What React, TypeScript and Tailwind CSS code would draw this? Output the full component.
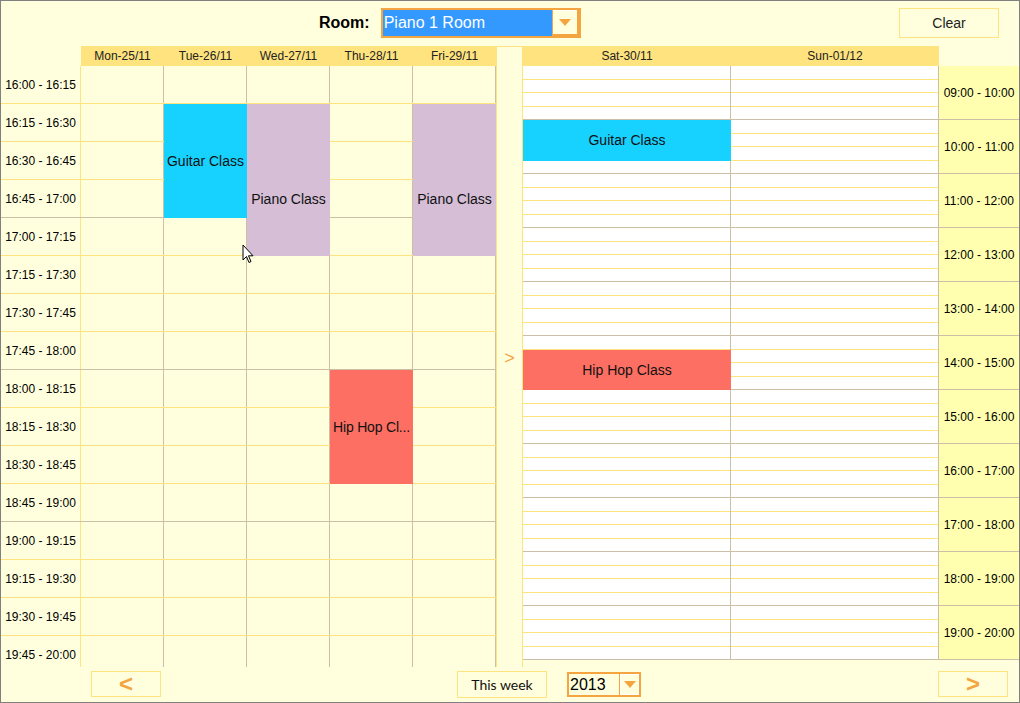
import React from "react";

const leftTimes = [
  "16:00 - 16:15", "16:15 - 16:30", "16:30 - 16:45", "16:45 - 17:00",
  "17:00 - 17:15", "17:15 - 17:30", "17:30 - 17:45", "17:45 - 18:00",
  "18:00 - 18:15", "18:15 - 18:30", "18:30 - 18:45", "18:45 - 19:00",
  "19:00 - 19:15", "19:15 - 19:30", "19:30 - 19:45", "19:45 - 20:00",
];
const days = ["Mon-25/11", "Tue-26/11", "Wed-27/11", "Thu-28/11", "Fri-29/11"];
const rightTimes = [
  "09:00 - 10:00", "10:00 - 11:00", "11:00 - 12:00", "12:00 - 13:00",
  "13:00 - 14:00", "14:00 - 15:00", "15:00 - 16:00", "16:00 - 17:00",
  "17:00 - 18:00", "18:00 - 19:00", "19:00 - 20:00",
];

function HourBlock() {
  return (
    <div className="flex flex-col">
      <div className="h-[14px] border-b border-[#ffe37f]" />
      <div className="h-[13px] border-b border-[#ffe37f]" />
      <div className="h-[14px] border-b border-[#ffe37f]" />
      <div className="h-[13px] border-b border-[#cdbfa6]" />
    </div>
  );
}

function Triangle() {
  return (
    <div className="h-0 w-0 border-l-[6px] border-r-[6px] border-t-[7px] border-l-transparent border-r-transparent border-t-[#f5a540]" />
  );
}

export default function App() {
  return (
    <div className="relative flex h-[703px] w-[1020px] flex-col overflow-hidden border border-[#808080] bg-[#ffffdd] font-['Liberation_Sans',Arial,sans-serif] text-[#111]">
      {/* Top bar */}
      <div className="flex h-[45px] shrink-0 items-start">
        <div className="mt-[7px] flex h-[30px] items-center pl-[318px]">
          <span className="text-[16px] font-bold text-black">Room:</span>
          <div className="ml-[11px] flex h-[30px] w-[200px] border-2 border-[#f5a540]">
            <div className="flex-1 bg-[#3399ff] pl-[1px] text-[16px] leading-[26px] text-white">
              Piano 1 Room
            </div>
            <div className="flex w-[27px] items-center justify-center border-l border-[#f5a540] bg-[#ffffdd] ring-1 ring-inset ring-white">
              <div className="flex h-full w-full items-center justify-center border-r-2 border-b-2 border-[#f5a540]">
                <Triangle />
              </div>
            </div>
          </div>
        </div>
        <button className="mr-[20px] ml-auto mt-[7px] h-[30px] w-[100px] border border-[#ffe37f] bg-[#ffffdd] text-[14px] text-[#222]">
          Clear
        </button>
      </div>

      {/* Main */}
      <div className="flex h-[621px] shrink-0">
        {/* Left weekday section */}
        <div className="flex w-[495px] shrink-0 flex-col">
          <div className="flex h-[20px] shrink-0">
            <div className="w-[80px] shrink-0" />
            {days.map((d) => (
              <div
                key={d}
                className="flex w-[83px] shrink-0 items-center justify-center bg-[#ffe37f] text-[12px] text-[#222]"
              >
                {d}
              </div>
            ))}
          </div>
          <div className="relative h-[601px] overflow-hidden">
            {leftTimes.map((t, i) => {
              const hour = (i + 1) % 4 === 0;
              return (
                <div
                  key={t}
                  className={
                    hour
                      ? "flex h-[38px] shrink-0 border-b border-[#cdbfa6]"
                      : "flex h-[38px] shrink-0 border-b border-[#ffe37f]"
                  }
                >
                  <div className="flex w-[80px] shrink-0 items-center justify-center border-r border-[#ffe37f] text-[12px] text-black">
                    {t}
                  </div>
                  {days.map((d) => (
                    <div key={d} className="w-[83px] shrink-0 border-r border-[#cdbfa6]" />
                  ))}
                </div>
              );
            })}
            {/* Events */}
            <div className="absolute left-[163px] top-[38px] flex h-[114px] w-[83px] items-center justify-center bg-[#17d1ff] text-[14px] text-[#111]">
              Guitar Class
            </div>
            <div className="absolute left-[246px] top-[38px] h-[152px] w-[83px] bg-[#d5bed6] pt-[87px] text-center text-[14px] leading-[16px] text-[#111]">
              Piano Class
            </div>
            <div className="absolute left-[412px] top-[38px] h-[152px] w-[83px] bg-[#d5bed6] pt-[87px] text-center text-[14px] leading-[16px] text-[#111]">
              Piano Class
            </div>
            <div className="absolute left-[329px] top-[304px] flex h-[114px] w-[83px] items-center justify-center bg-[#fd6f63] text-[14px] text-[#111]">
              <span className="whitespace-nowrap tracking-[-0.2px]">Hip Hop Cl...</span>
            </div>
          </div>
        </div>

        {/* Divider */}
        <div className="flex w-[27px] shrink-0 items-center justify-center border-x border-t border-[#ffe37f] pt-[3px] text-[18px] text-[#f5a540]">
          &gt;
        </div>

        {/* Weekend */}
        <div className="flex w-[416px] shrink-0 flex-col">
          <div className="flex h-[20px] shrink-0 bg-[#ffe37f]">
            <div className="flex w-[208px] items-center justify-center text-[12px] text-[#222]">Sat-30/11</div>
            <div className="flex w-[208px] items-center justify-center text-[12px] text-[#222]">Sun-01/12</div>
          </div>
          <div className="relative flex h-[594px] shrink-0 bg-white">
            {[0, 1].map((c) => (
              <div key={c} className="flex w-[208px] shrink-0 flex-col border-r border-[#cdbfa6]">
                {rightTimes.map((t) => (
                  <HourBlock key={t} />
                ))}
              </div>
            ))}
            <div className="absolute left-0 top-[54px] flex h-[41px] w-[208px] items-center justify-center bg-[#17d1ff] text-[14px] text-[#111]">
              Guitar Class
            </div>
            <div className="absolute left-0 top-[284px] flex h-[40px] w-[208px] items-center justify-center bg-[#fd6f63] text-[14px] text-[#111]">
              Hip Hop Class
            </div>
          </div>
        </div>

        {/* Right time column */}
        <div className="mt-[20px] flex w-[80px] shrink-0 flex-col self-start bg-[#ffffaf]">
          {rightTimes.map((t) => (
            <div
              key={t}
              className="flex h-[54px] items-center justify-center border-b border-[#cdbfa6] text-[12px] text-black"
            >
              {t}
            </div>
          ))}
        </div>
      </div>

      {/* Bottom bar */}
      <div className="flex h-[35px] shrink-0 items-start">
        <button className="ml-[90px] mt-[4px] flex h-[26px] w-[70px] items-center justify-center border border-[#ffe37f] text-[24px] font-bold leading-none text-[#f5a540]">
          &lt;
        </button>
        <button className="ml-[296px] mt-[4px] flex h-[27px] w-[90px] items-center justify-center border border-[#ffe37f] font-['Lato',sans-serif] text-[14px] text-[#111]">
          This week
        </button>
        <div className="ml-[20px] mt-[5px] flex h-[25px] w-[74px] border-2 border-[#f5a540]">
          <div className="flex-1 pl-[1px] text-[16px] leading-[21px] text-black">2013</div>
          <div className="flex w-[20px] items-center justify-center border-l border-[#f5a540] ring-1 ring-inset ring-white">
            <Triangle />
          </div>
        </div>
        <button className="ml-[297px] mt-[4px] flex h-[26px] w-[70px] items-center justify-center border border-[#ffe37f] text-[24px] font-bold leading-none text-[#f5a540]">
          &gt;
        </button>
      </div>

      {/* Mouse cursor */}
      <svg
        className="pointer-events-none absolute left-[241px] top-[243px]"
        width="13"
        height="21"
        viewBox="0 0 13 21"
      >
        <path
          d="M1 1 L1 16 L4.5 12.5 L7 18.5 L9 17.5 L6.5 11.8 L11 11.8 Z"
          fill="white"
          stroke="black"
          strokeWidth="1"
          strokeLinejoin="round"
        />
      </svg>
    </div>
  );
}
